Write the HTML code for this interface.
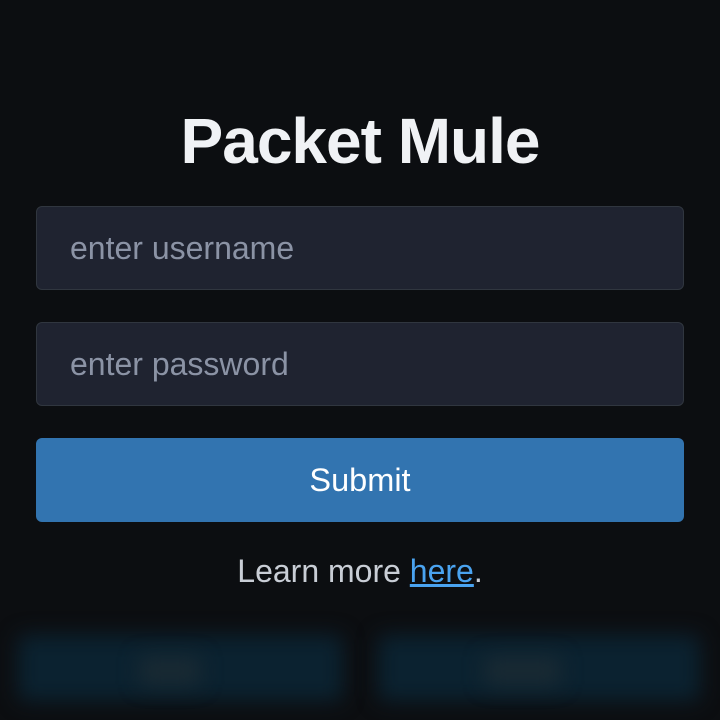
<!DOCTYPE html>
<html><head><style>
html,body{margin:0;padding:0;background:#0c0e11;width:720px;height:720px;overflow:hidden;font-family:"Liberation Sans",sans-serif;}
h1{position:absolute;top:106px;left:0;width:720px;text-align:center;margin:0;color:#f0f2f5;font-size:64px;font-weight:bold;letter-spacing:-1px;line-height:70px;}
.in{position:absolute;left:36px;width:646px;height:82px;background:#1f2330;border:1px solid #30363f;border-radius:6px;color:#8b93a5;font-size:32px;line-height:82px;box-sizing:content-box;}
.in span{margin-left:33px;}
.btn{position:absolute;left:36px;top:438px;width:648px;height:84px;background:#3274b0;border-radius:6px;color:#fff;font-size:32.5px;line-height:84px;text-align:center;}
.lm{position:absolute;top:550px;left:0;width:720px;text-align:center;color:#c9ced6;font-size:32px;line-height:42px;}
.lm a{color:#4aa3f0;text-decoration:underline;}
.b{position:absolute;top:635px;height:66px;background:#0b2230;filter:blur(10px);border-radius:8px;}
.g{position:absolute;top:657px;height:28px;background:#1a2a33;filter:blur(10px);}
</style></head><body>
<h1>Packet Mule</h1>
<div class="in" style="top:206px"><span>enter username</span></div>
<div class="in" style="top:322px"><span>enter password</span></div>
<div class="btn">Submit</div>
<div class="lm">Learn more <a>here</a>.</div>
<div class="b" style="left:18px;width:325px"></div>
<div class="b" style="left:378px;width:322px"></div>
<div class="g" style="left:140px;width:60px"></div>
<div class="g" style="left:485px;width:75px"></div>
</body></html>
